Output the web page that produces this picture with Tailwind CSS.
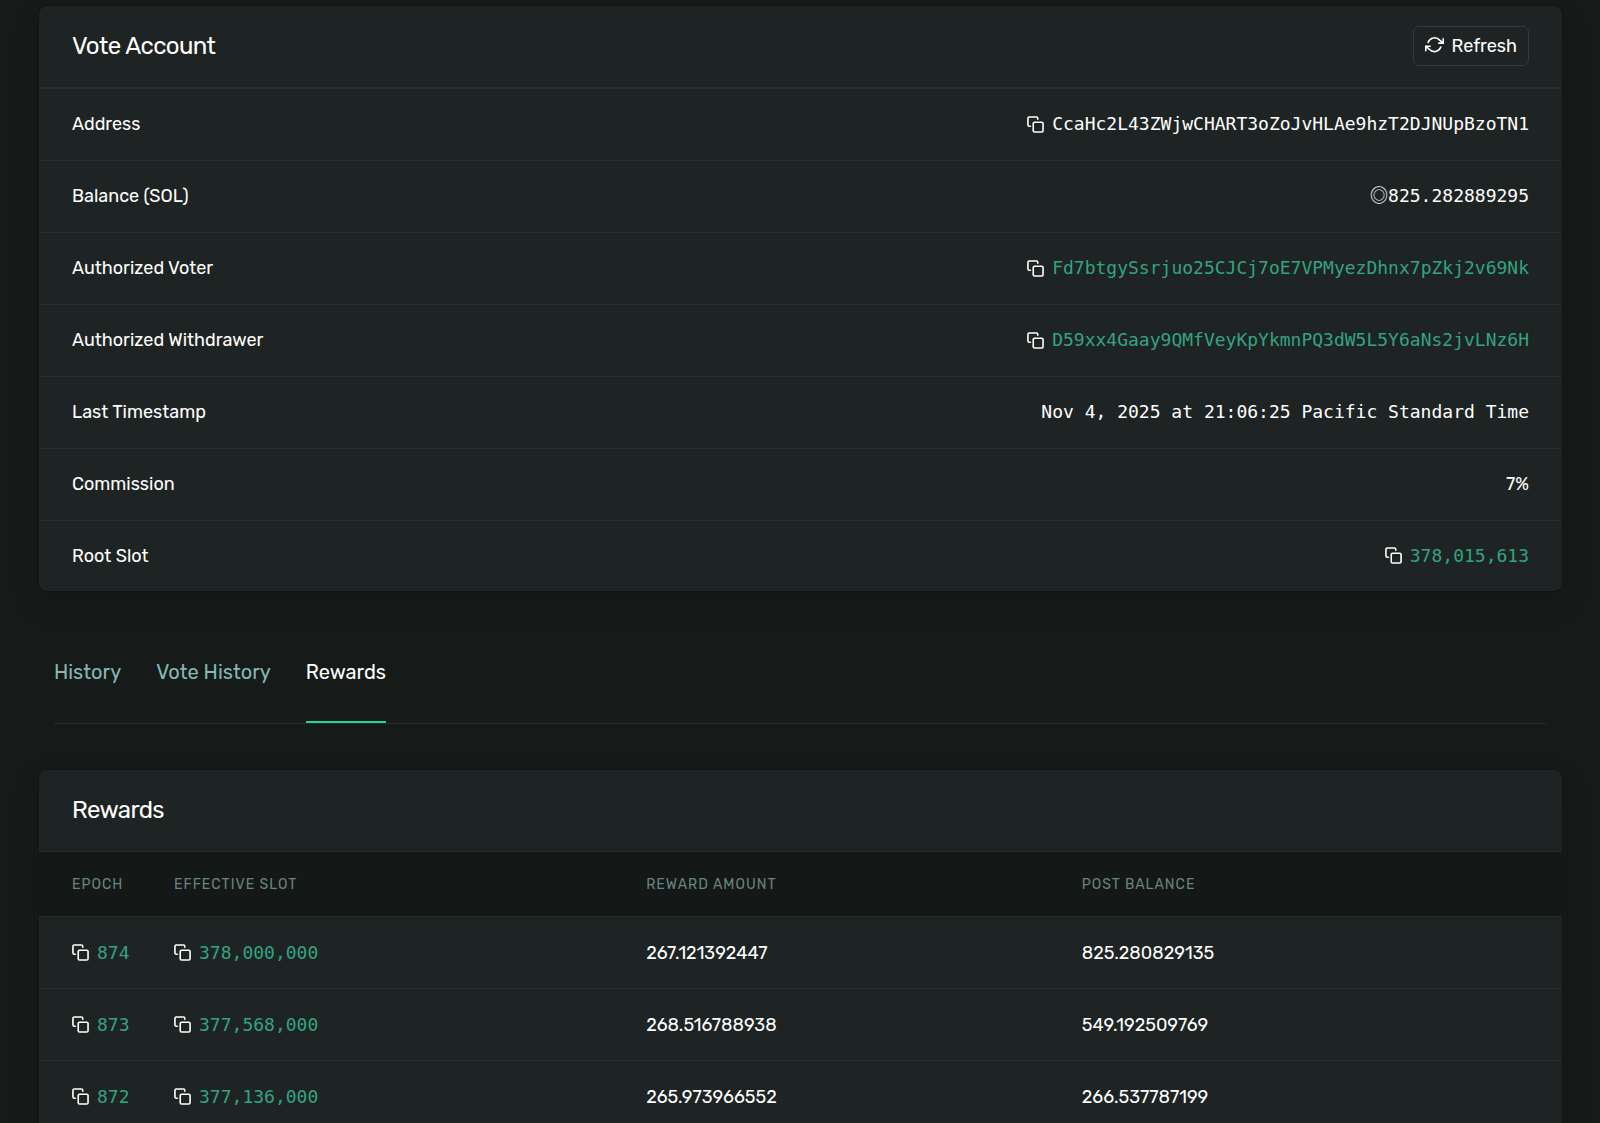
<!DOCTYPE html>
<html lang="en">
<head>
    <meta charset="UTF-8">
    <meta name="viewport" content="width=device-width, initial-scale=1.0">
    <title>Vote Account</title>
    <script src="https://cdn.jsdelivr.net/npm/@tailwindcss/browser@4"></script>
</head>
<body class="min-h-screen overflow-x-hidden bg-[#161a19] pr-[38px] pl-[39px] pt-1.5 font-['Rubik','Roboto',sans-serif] text-lg text-white">
    <!-- Shared icons -->
    <svg class="hidden">
        <symbol id="icon-copy" viewBox="0 0 18 18" fill="none" stroke="currentColor" stroke-width="1.7" stroke-linecap="round" stroke-linejoin="round">
            <rect x="6.6" y="6.6" width="10.4" height="10.4" rx="1.4" />
            <path d="M3.6 10.9H2.4A1.4 1.4 0 0 1 1 9.5V2.4A1.4 1.4 0 0 1 2.4 1h7.6a1.4 1.4 0 0 1 1.4 1.4V3.4" />
        </symbol>
    </svg>

    <!-- Account overview -->
    <section class="rounded-lg bg-[#1e2423] shadow-[0_0_0_1px_#121514,0_12px_24px_#12151440]">
        <div class="flex h-[83px] items-center justify-between border-b-2 border-[#282d2b] px-[33px] pb-0.5">
            <h2 class="text-2xl tracking-tight">Vote Account</h2>
            <button type="button" class="flex h-10 items-center gap-2 rounded-md border border-[#343a38] px-[11px]">
                <svg class="size-[19px]" viewBox="0 0 24 24" fill="none" stroke="currentColor" stroke-width="2" stroke-linecap="round" stroke-linejoin="round">
                    <path d="M23 3.5v5.5h-5.5M1 18.5V13h5.5" />
                    <path d="M4 8a8.6 8.6 0 0 1 14.5-2.8L23 9M1 13l4.5 3.8A8.6 8.6 0 0 0 20 14" />
                </svg>
                Refresh
            </button>
        </div>
        <table class="w-full">
            <tbody class="divide-y divide-[#282d2b]">
                <tr class="h-[71px]">
                    <th scope="row" class="px-[33px] text-left font-normal">Address</th>
                    <td class="px-[33px]">
                        <div class="flex items-center justify-end gap-2">
                            <button type="button" aria-label="Copy address"><svg class="size-[17px]"><use href="#icon-copy" /></svg></button>
                            <span class="font-['DejaVu_Sans_Mono',monospace]">CcaHc2L43ZWjwCHART3oZoJvHLAe9hzT2DJNUpBzoTN1</span>
                        </div>
                    </td>
                </tr>
                <tr class="h-18">
                    <th scope="row" class="px-[33px] text-left font-normal">Balance (SOL)</th>
                    <td class="px-[33px] text-right font-['DejaVu_Sans_Mono',monospace]"><span class="font-['Noto_Sans_CJK_JP',sans-serif] leading-none">◎</span>825.282889295</td>
                </tr>
                <tr class="h-18">
                    <th scope="row" class="px-[33px] text-left font-normal">Authorized Voter</th>
                    <td class="px-[33px]">
                        <div class="flex items-center justify-end gap-2">
                            <button type="button" aria-label="Copy voter"><svg class="size-[17px]"><use href="#icon-copy" /></svg></button>
                            <a href="#" class="font-['DejaVu_Sans_Mono',monospace] text-[#33a382]">Fd7btgySsrjuo25CJCj7oE7VPMyezDhnx7pZkj2v69Nk</a>
                        </div>
                    </td>
                </tr>
                <tr class="h-18">
                    <th scope="row" class="px-[33px] text-left font-normal">Authorized Withdrawer</th>
                    <td class="px-[33px]">
                        <div class="flex items-center justify-end gap-2">
                            <button type="button" aria-label="Copy withdrawer"><svg class="size-[17px]"><use href="#icon-copy" /></svg></button>
                            <a href="#" class="font-['DejaVu_Sans_Mono',monospace] text-[#33a382]">D59xx4Gaay9QMfVeyKpYkmnPQ3dW5L5Y6aNs2jvLNz6H</a>
                        </div>
                    </td>
                </tr>
                <tr class="h-18">
                    <th scope="row" class="px-[33px] text-left font-normal">Last Timestamp</th>
                    <td class="px-[33px] text-right font-['DejaVu_Sans_Mono',monospace]">Nov 4, 2025 at 21:06:25 Pacific Standard Time</td>
                </tr>
                <tr class="h-18">
                    <th scope="row" class="px-[33px] text-left font-normal">Commission</th>
                    <td class="px-[33px] text-right">7%</td>
                </tr>
                <tr class="h-[71px]">
                    <th scope="row" class="px-[33px] text-left font-normal">Root Slot</th>
                    <td class="px-[33px]">
                        <div class="flex items-center justify-end gap-2">
                            <button type="button" aria-label="Copy root slot"><svg class="size-[17px]"><use href="#icon-copy" /></svg></button>
                            <a href="#" class="font-['DejaVu_Sans_Mono',monospace] text-[#33a382]">378,015,613</a>
                        </div>
                    </td>
                </tr>
            </tbody>
        </table>
    </section>

    <!-- Tabs -->
    <nav class="mx-[15px] mt-8 flex h-[101px] gap-[35px] border-b border-[#282d2b] text-xl">
        <a href="#" class="flex items-center border-b-2 border-transparent text-[#86b8b6]">History</a>
        <a href="#" class="flex items-center border-b-2 border-transparent text-[#86b8b6]">Vote History</a>
        <a href="#" class="flex items-center border-b-2 border-[#1dd79b]" aria-current="page">Rewards</a>
    </nav>

    <!-- Rewards -->
    <section class="mt-[46px] rounded-lg bg-[#1e2423] shadow-[0_0_0_1px_#121514,0_12px_24px_#12151440]">
        <div class="flex h-[81px] items-center px-[33px] pb-0.5">
            <h2 class="text-2xl tracking-tight">Rewards</h2>
        </div>
        <table class="w-full table-fixed text-left">
            <thead class="border-y border-[#282d2b] bg-[#141816] text-sm tracking-[1px] text-[#698582]">
                <tr class="h-[65px]">
                    <th scope="col" class="w-[6.7%] pt-0.5 pl-[33px] font-normal">EPOCH</th>
                    <th scope="col" class="w-[31%] pt-0.5 pl-[33px] font-normal">EFFECTIVE SLOT</th>
                    <th scope="col" class="w-[28.6%] pt-0.5 pl-[33px] font-normal">REWARD AMOUNT</th>
                    <th scope="col" class="pt-0.5 pl-[33px] font-normal">POST BALANCE</th>
                </tr>
            </thead>
            <tbody id="reward-rows" class="divide-y divide-[#282d2b]"></tbody>
        </table>
    </section>

    <!-- Reward Row Template -->
    <template id="reward-row-template">
        <tr class="h-18">
            <td class="pl-[33px]">
                <div class="flex items-center gap-2">
                    <button type="button" aria-label="Copy epoch"><svg class="size-[17px]"><use href="#icon-copy" /></svg></button>
                    <a href="#" class="epoch font-['DejaVu_Sans_Mono',monospace] text-[#33a382]"></a>
                </div>
            </td>
            <td class="pl-[33px]">
                <div class="flex items-center gap-2">
                    <button type="button" aria-label="Copy slot"><svg class="size-[17px]"><use href="#icon-copy" /></svg></button>
                    <a href="#" class="slot font-['DejaVu_Sans_Mono',monospace] text-[#33a382]"></a>
                </div>
            </td>
            <td class="amount pl-[33px]"></td>
            <td class="balance pl-[33px]"></td>
        </tr>
    </template>

    <script>
        const rewards = [
            { epoch: '874', slot: '378,000,000', amount: '267.121392447', balance: '825.280829135' },
            { epoch: '873', slot: '377,568,000', amount: '268.516788938', balance: '549.192509769' },
            { epoch: '872', slot: '377,136,000', amount: '265.973966552', balance: '266.537787199' }
        ];

        const rows = document.getElementById('reward-rows');
        rewards.forEach(reward => {
            const row = document.getElementById('reward-row-template').content.cloneNode(true);
            Object.keys(reward).forEach(key => {
                row.querySelector('.' + key).textContent = reward[key];
            });
            rows.appendChild(row);
        });
    </script>
</body>
</html>
